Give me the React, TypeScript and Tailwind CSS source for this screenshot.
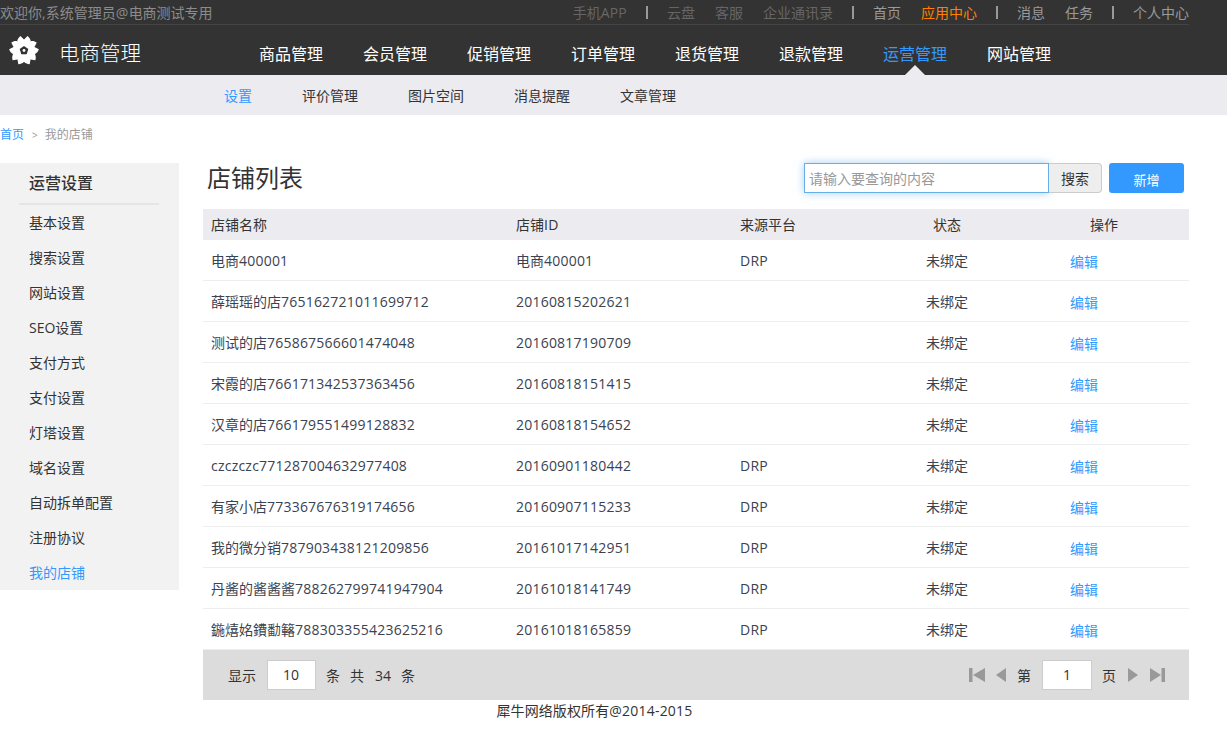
const topLinks = [
  { group: ["手机APP"], color: "text-[#666]" },
  { group: ["云盘", "客服", "企业通讯录"], color: "text-[#666]" },
  { group: ["首页", "应用中心"], color: "text-[#999]" },
  { group: ["消息", "任务"], color: "text-[#999]" },
  { group: ["个人中心"], color: "text-[#999]" },
];

const mainNav = ["商品管理", "会员管理", "促销管理", "订单管理", "退货管理", "退款管理", "运营管理", "网站管理"];
const subNav = ["设置", "评价管理", "图片空间", "消息提醒", "文章管理"];
const sideItems = ["基本设置", "搜索设置", "网站设置", "SEO设置", "支付方式", "支付设置", "灯塔设置", "域名设置", "自动拆单配置", "注册协议", "我的店铺"];

const rows = [
  ["电商400001", "电商400001", "DRP"],
  ["薛瑶瑶的店765162721011699712", "20160815202621", ""],
  ["测试的店765867566601474048", "20160817190709", ""],
  ["宋霞的店766171342537363456", "20160818151415", ""],
  ["汉章的店766179551499128832", "20160818154652", ""],
  ["czczczc771287004632977408", "20160901180442", "DRP"],
  ["有家小店773367676319174656", "20160907115233", "DRP"],
  ["我的微分销787903438121209856", "20161017142951", "DRP"],
  ["丹酱的酱酱酱788262799741947904", "20161018141749", "DRP"],
  ["鍦熺姳鐨勫簵788303355423625216", "20161018165859", "DRP"],
];

// latin runs are a touch wider in the reference than the CJK font grid
function Txt({ children }: { children: string }) {
  return (
    <>
      {children.split(/([\x00-\x7f]+)/).map((part, i) =>
        i % 2 === 1 ? (
          <span key={i} className="tracking-[0.22px]">
            {part}
          </span>
        ) : (
          part
        )
      )}
    </>
  );
}

function Flower() {
  return (
    <svg width="30" height="30" viewBox="0 0 30 30" fill="#fff">
      {[0, 72, 144, 216, 288].map((a) => (
        <path
          key={a}
          transform={`rotate(${a} 15 15.5)`}
          d="M15 15.5 C10 12.5 8 9 8.3 6 C8.5 4 10 2 11.5 1 L15 4.5 L18.5 1 C20 2 21.5 4 21.7 6 C22 9 20 12.5 15 15.5 Z"
        />
      ))}
      <path d="M15 11 L19.3 14.1 L17.7 19.2 L12.3 19.2 L10.7 14.1 Z" fill="#333" />
      <circle cx="15" cy="15.5" r="1.4" fill="#fff" />
    </svg>
  );
}

function PagerIcon({ kind }: { kind: "first" | "prev" | "next" | "last" }) {
  if (kind === "first")
    return (
      <svg width="16" height="16" viewBox="0 0 16 16" fill="#999">
        <rect x="0" y="1" width="3.5" height="14" />
        <path d="M16 1 V15 L4 8 Z" />
      </svg>
    );
  if (kind === "prev")
    return (
      <svg width="10" height="16" viewBox="0 0 10 16" fill="#999">
        <path d="M10 1 V15 L0 8 Z" />
      </svg>
    );
  if (kind === "next")
    return (
      <svg width="10" height="16" viewBox="0 0 10 16" fill="#999">
        <path d="M0 1 V15 L10 8 Z" />
      </svg>
    );
  return (
    <svg width="15" height="16" viewBox="0 0 15 16" fill="#999">
      <path d="M0 1 V15 L11 8 Z" />
      <rect x="11.5" y="1" width="3.5" height="14" />
    </svg>
  );
}

export default function App() {
  return (
    <div className="min-h-[741px] bg-white text-[14px] text-[#3b4250] font-['Open_Sans','Noto_Sans_CJK_SC',sans-serif]">
      {/* top strip */}
      <div className="bg-[#333]">
        <div className="w-[1189px] h-[25px] pt-[1px] flex items-center justify-between border-b border-[#444] text-[14px] leading-[24px]">
          <span className="text-[#8c8c8c]">
            <Txt>欢迎你,系统管理员@电商测试专用</Txt>
          </span>
          <div className="flex items-center">
            {topLinks.map((g, i) => (
              <div key={i} className="flex items-center">
                {i > 0 && <span className="w-[2px] h-[13px] bg-[#999] mx-[19px]" />}
                <div className="flex gap-[20px]">
                  {g.group.map((t) => (
                    <span key={t} className={t === "应用中心" ? "text-[#ff8000]" : g.color}>
                      <Txt>{t}</Txt>
                    </span>
                  ))}
                </div>
              </div>
            ))}
          </div>
        </div>
        <div className="h-[50px] flex items-center">
          <div className="w-[259px] flex items-center pl-[9px] shrink-0">
            <Flower />
            <span className="ml-[20px] pt-[6px] text-[20.5px] font-light text-white">电商管理</span>
          </div>
          <nav className="flex gap-[40px] pt-[8px] text-[16px] text-white">
            {mainNav.map((n) => (
              <span key={n} className={n === "运营管理" ? "relative text-[#3399ff]" : ""}>
                {n}
                {n === "运营管理" && (
                  <span className="absolute left-[22px] top-[23px] border-x-[10px] border-b-[10px] border-x-transparent border-b-[#ecebf0]" />
                )}
              </span>
            ))}
          </nav>
        </div>
      </div>

      {/* sub nav */}
      <div className="h-[40px] bg-[#ecebf0] flex items-center gap-[50px] pl-[224px] text-[#333]">
        {subNav.map((s, i) => (
          <span key={s} className={i === 0 ? "text-[#3399ff]" : ""}>
            {s}
          </span>
        ))}
      </div>

      {/* breadcrumb */}
      <div className="h-[48px] flex items-center text-[12px] text-[#999] pb-[8px]">
        <span className="text-[#3399ff]">首页</span>
        <span className="ml-[8px] mr-[7px] text-[10px]">&gt;</span>
        <span>我的店铺</span>
      </div>

      <div className="flex items-start">
        {/* sidebar */}
        <aside className="w-[179px] shrink-0 bg-[#f2f2f2] h-[427px]">
          <div className="ml-[19px] mr-[20px] h-[42px] border-b-2 border-[#e5e5e5] pl-[10px] leading-[40px] text-[16px] font-medium text-[#333]">
            运营设置
          </div>
          <ul className="pl-[29px] text-[#333]">
            {sideItems.map((s, i) => (
              <li key={s} className={`h-[35px] leading-[35px] ${i === 10 ? "text-[#3399ff]" : ""}`}>
                {s}
              </li>
            ))}
          </ul>
        </aside>

        {/* main */}
        <main className="w-[986px] ml-[24px]">
          <div className="h-[46px] flex items-start justify-between">
            <h1 className="pl-[4px] text-[24px] leading-[30px] font-normal text-[#333]">店铺列表</h1>
            <div className="flex mr-[5px]">
              <div className="w-[245px] h-[30px] border border-[#66afe9] bg-white shadow-[0_0_8px_rgba(102,175,233,0.6)] pl-[4px] leading-[29px] text-[#999]">
                请输入要查询的内容
              </div>
              <button className="w-[53px] h-[30px] bg-[#eee] border border-[#ccc] border-l-0 rounded-r-[4px] text-[#333]">
                搜索
              </button>
              <button className="ml-[7px] w-[75px] h-[30px] bg-[#3399ff] rounded-[3px] text-white text-[13px] pt-[6px]">
                新增
              </button>
            </div>
          </div>

          <div className="grid grid-cols-[305px_224px_143px_144px_170px] h-[31px] bg-[#ecebf0] items-center text-[#333]">
            <div className="pl-[8px]">店铺名称</div>
            <div className="pl-[8px]">
              <Txt>店铺ID</Txt>
            </div>
            <div className="pl-[8px]">来源平台</div>
            <div className="text-center">状态</div>
            <div className="text-center">操作</div>
          </div>
          {rows.map((r) => (
            <div key={r[1] + r[0]} className="grid grid-cols-[305px_224px_143px_144px_170px] h-[41px] items-center border-b border-[#eee]">
              <div className="pl-[8px]">
                <Txt>{r[0]}</Txt>
              </div>
              <div className="pl-[8px]">
                <Txt>{r[1]}</Txt>
              </div>
              <div className="pl-[8px]">
                <Txt>{r[2]}</Txt>
              </div>
              <div className="text-center">未绑定</div>
              <div className="pl-[51px] pt-[2px] text-[#3399ff]">编辑</div>
            </div>
          ))}

          {/* pager */}
          <div className="h-[50px] bg-[#dcdcdc] flex items-center justify-between pl-[25px] pr-[24px] text-[#333]">
            <div className="flex items-center">
              <span>显示</span>
              <span className="ml-[11px] w-[49px] h-[30px] pr-[1px] bg-white border border-[#ccc] text-center leading-[28px]">10</span>
              <span className="ml-[10px]">条</span>
              <span className="ml-[10px]">共</span>
              <span className="ml-[11px]">34</span>
              <span className="ml-[10px]">条</span>
            </div>
            <div className="flex items-center">
              <PagerIcon kind="first" />
              <span className="ml-[11px] flex">
                <PagerIcon kind="prev" />
              </span>
              <span className="ml-[11px]">第</span>
              <span className="ml-[11px] w-[50px] h-[30px] bg-white border border-[#ccc] text-center leading-[28px]">1</span>
              <span className="ml-[10px]">页</span>
              <span className="ml-[12px] flex">
                <PagerIcon kind="next" />
              </span>
              <span className="ml-[12px] flex">
                <PagerIcon kind="last" />
              </span>
            </div>
          </div>
        </main>
      </div>

      <div className="w-[1189px] text-center leading-[22px] tracking-[0.1px] text-[#333]">
        <Txt>犀牛网络版权所有@2014-2015</Txt>
      </div>
    </div>
  );
}
